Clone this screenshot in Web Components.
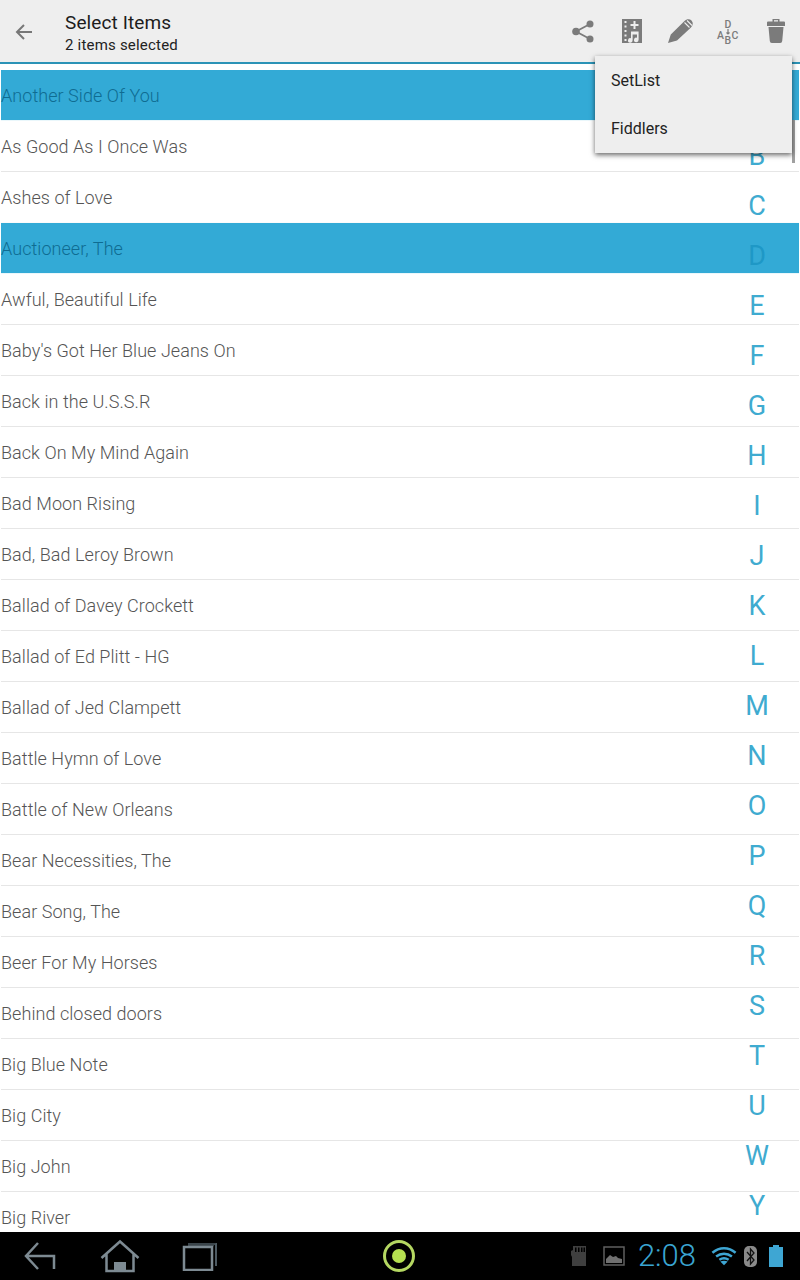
<!DOCTYPE html>
<html><head><meta charset="utf-8">
<style>
html,body{margin:0;padding:0;background:#fff}
body{font-family:Roboto,"Liberation Sans",sans-serif}
</style></head><body>
<app-screen></app-screen>
<script>
function def(name,css,html,setup){
  customElements.define(name,class extends HTMLElement{
    constructor(){super();const r=this.attachShadow({mode:'open'});r.innerHTML='<style>'+css+'</style>'+html;}
    connectedCallback(){if(setup)setup(this)}
  });
}
const G='#7b7b7b';
def('action-bar',`
:host{display:flex;flex:none;height:70px;box-sizing:border-box;background:#fff;flex-direction:column}
.bar{height:62px;background:#eeeeee;display:flex;align-items:stretch}
.line{height:2px;background:#2b93b6}
.back{width:48px;display:flex;align-items:center;justify-content:center;padding-top:2px;box-sizing:border-box}
.titles{margin-left:17px;flex:1;color:#1c1c1c;padding-top:11px;box-sizing:border-box}
.t{font-size:19px;letter-spacing:.1px;line-height:24px;height:24px}
.s{font-size:15px;letter-spacing:.2px;line-height:20px;color:#222}
.icons{display:flex;width:240px}
.icons svg{display:block;overflow:visible}
.ic{width:48px;height:62px;display:flex;align-items:center;justify-content:center}
text{font-family:Roboto,sans-serif;font-size:10.500px;font-weight:500;fill:${G}}
`,`
<div class="bar">
 <div class="back"><svg width="18" height="16" viewBox="0 0 18 16" fill="none" stroke="#777" stroke-width="2"><path d="M17 8H2M9 1 2 8l7 7"/></svg></div>
 <div class="titles"><div class="t">Select Items</div><div class="s">2 items selected</div></div>
 <div class="icons">
  <div class="ic"><svg style="margin-left:-3px" width="22" height="23" viewBox="0 0 22 23"><circle cx="18" cy="4" r="3.500" fill="${G}"/><circle cx="4" cy="11.500" r="3.800" fill="${G}"/><circle cx="18" cy="19" r="3.500" fill="${G}"/><path d="M18 4 4 11.500 18 19" stroke="${G}" stroke-width="1.800" fill="none"/></svg></div>
  <div class="ic"><svg width="20" height="24" viewBox="0 0 20 24"><path fill="${G}" fill-rule="evenodd" d="M0 0h20v24H0zM2.500 2v2h2V2zM2.500 6.500v2h2v-2zM2.500 11v2h2v-2zM2.500 15.500v2h2v-2zM2.500 20v2h2v-2zM11.500 2v3h-3v2h3v3h2V7h3V5h-3V2zM9 12.500v6.700a2.300 2.300 0 1 0 1.600 2.100v-5.800h4.400v3.200a2.300 2.300 0 1 0 1.600 2.100v-8.300z"/></svg></div>
  <div class="ic"><svg width="25" height="24" viewBox="0 0 25 24"><path fill="${G}" d="M0 24l2.800-8.500L16.500 2C18.500 0 21.500-.5 23.500 1.500s1.500 5-.5 7L9 21.500z"/><path stroke="#eee" stroke-width="1.100" d="M16.500 3.500l5 5M19 1.500l5 5"/></svg></div>
  <div class="ic"><svg width="22" height="25" viewBox="0 0 22 25"><text x="7.500" y="9">D</text><text x="0" y="19.500">A</text><text x="14.400" y="19.500">C</text><text x="7.500" y="25">B</text><path stroke="${G}" stroke-width="1.200" fill="none" d="M11 10v5M9.500 13.500 11 15l1.500-1.500"/></svg></div>
  <div class="ic"><svg width="18" height="24" viewBox="0 0 18 24"><path fill="${G}" d="M5.500 0h7v2.500H17Q18 2.500 18 3.500V7H0V3.500Q0 2.500 1 2.500h4.500z"/><path fill="#eee" d="M7 1.200h4v1.300H7z"/><path fill="${G}" d="M1.500 8h15L15.200 22q-.2 2-2 2H4.800q-1.800 0-2-2z"/></svg></div>
 </div>
</div>
<div class="line"></div>`);

def('song-row',`
:host{display:flex;flex:none;align-items:center;height:50px;border-bottom:1px solid #e6e6e6;font-size:18px;font-weight:300;letter-spacing:.05px;color:#555;white-space:nowrap;background:#fff}
:host([selected]){background:#33aad6;color:#0f6c92;border-bottom-color:#eaf7fb}
:host([preselect]){border-bottom-color:#fbfbfb}
`,`<slot></slot>`);

def('song-list',`
:host{display:flex;flex-direction:column;flex:1;overflow:hidden;min-height:0;padding:0 1px}
`,`<slot></slot>`);

def('alpha-index',`
:host{position:absolute;top:81px;right:13px;width:60px;display:flex;flex-direction:column;font-size:27px;color:#3fabd0}
span{height:50px;line-height:50px;text-align:center;display:block}
`,``,el=>{
  const r=el.shadowRoot;
  if(r.querySelector('span'))return;
  for(const c of 'ABCDEFGHIJKLMNOPQRSTUWY'){const s=document.createElement('span');s.textContent=c;if(c==='D')s.style.color='#1e98c6';r.appendChild(s);}
});

def('popup-menu',`
:host{position:absolute;left:595px;top:56px;width:197px;height:97px;background:#eeeeee;box-shadow:0 2px 5px rgba(0,0,0,.6);display:flex;flex-direction:column;font-size:16px;color:#222;padding-top:1px;box-sizing:border-box}
div{height:48px;line-height:48px;padding-left:16px}
`,`<div>SetList</div><div>Fiddlers</div>`);

def('scroll-thumb',`
:host{position:absolute;left:792px;top:120px;width:3px;height:43px;background:#a0a0a0;display:block}
`,``);

def('system-bar',`
:host{display:flex;flex:none;height:48px;background:#000;align-items:center;position:relative}
svg{display:block}
.left{display:flex;align-items:center}
.mid{position:absolute;left:382px;top:7px}
.right{margin-left:auto;display:flex;align-items:center}
.clock{font-size:31px;color:#3aa5d2;font-weight:300;line-height:48px}
`,`
<div class="left">
 <svg style="margin-left:23px" width="34" height="32" viewBox="0 0 34 32" fill="none" stroke="#7d8a92" stroke-width="2.500"><path d="M15 3 3 16l12 13M3 16h28v13"/></svg>
 <svg style="margin-left:43px" width="40" height="34" viewBox="0 0 40 34" fill="none" stroke="#7d8a92" stroke-width="2.500"><path d="M1.500 19 20 2.500 38.500 19M6.500 15v17h27V15"/><path fill="#7d8a92" stroke="none" d="M14 23h12v10H14z"/></svg>
 <svg style="margin-left:42px" width="36" height="30" viewBox="0 0 36 30" fill="none"><path stroke="#4d5a62" stroke-width="2" d="M6 3h28v22"/><path fill="#3b454b" d="M6 2h28l-4 5H6z"/><rect x="2" y="6" width="28" height="23" stroke="#7d8a92" stroke-width="2.500"/></svg>
</div>
<div class="mid"><svg width="34" height="34" viewBox="0 0 34 34"><circle cx="17" cy="17" r="14.500" fill="none" stroke="#b5d862" stroke-width="3"/><circle cx="17" cy="17" r="7" fill="#b5df50"/></svg></div>
<div class="right">
 <svg width="15" height="20" viewBox="0 0 15 20"><path fill="#3f3f3f" fill-rule="evenodd" d="M2 0h13v20H1V11L0 9V5l2-1zM4 1.500V6h1.500V1.500zM7 1.500V6h1.500V1.500zM10 1.500V6h1.500V1.500zM12.500 1.500V6H14V1.500z"/></svg>
 <svg style="margin-left:17px" width="22" height="20" viewBox="0 0 22 20"><rect x="1" y="1" width="20" height="18" fill="none" stroke="#5f5f5f" stroke-width="1.500"/><path fill="#707070" d="M3 17v-4l4-4 3 2 3-1 2 2 4 1v4z"/></svg>
 <span class="clock" style="margin-left:13px">2:08</span>
 <svg style="margin-left:15px" width="26" height="20" viewBox="0 0 28 20"><path fill="none" stroke="#3ea6d3" stroke-width="2.600" d="M1.500 6.500C9 0 19 0 26.500 6.500M5.500 10.500c5-4 12-4 17 0M9 14c3-2 7-2 10 0"/><path fill="#3ea6d3" d="M14 20l-4-4q4-2 8 0z"/></svg>
 <svg style="margin-left:7px" width="13" height="21" viewBox="0 0 13 21"><rect width="13" height="21" rx="5" fill="#8a8a8a"/><path fill="none" stroke="#111" stroke-width="1.300" d="M3 6l7 8-3.500 4V3L10 7l-7 8"/></svg>
 <svg style="margin-left:12px;margin-right:17px" width="14" height="22" viewBox="0 0 14 22"><path fill="#3ea6d3" d="M4 0h6v2h4v20H0V2h4z"/></svg>
</div>`);

const songs=["Another Side Of You","As Good As I Once Was","Ashes of Love","Auctioneer, The","Awful, Beautiful Life","Baby's Got Her Blue Jeans On","Back in the U.S.S.R","Back On My Mind Again","Bad Moon Rising","Bad, Bad Leroy Brown","Ballad of Davey Crockett","Ballad of Ed Plitt - HG","Ballad of Jed Clampett","Battle Hymn of Love","Battle of New Orleans","Bear Necessities, The","Bear Song, The","Beer For My Horses","Behind closed doors","Big Blue Note","Big City","Big John","Big River"];
def('app-screen',`
:host{display:flex;flex-direction:column;width:800px;height:1280px;position:relative;overflow:hidden;background:#fff}
`,`<action-bar></action-bar><song-list>${songs.map((s,i)=>`<song-row${i==0||i==3?' selected':''}${i==2?' preselect':''}>${s}</song-row>`).join('')}</song-list><alpha-index></alpha-index><scroll-thumb></scroll-thumb><popup-menu></popup-menu><system-bar></system-bar>`);
</script>
</body></html>
